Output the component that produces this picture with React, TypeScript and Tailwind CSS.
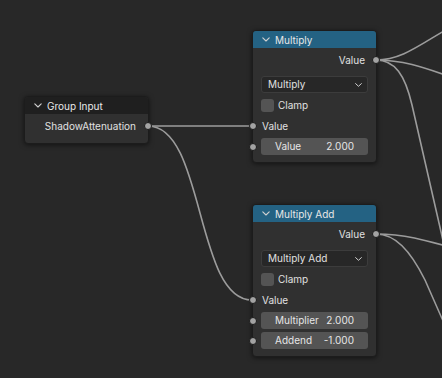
import type { ReactNode } from "react"

const font = { fontFamily: "Inter, 'Noto Sans', sans-serif" }

function Chevron({ className = "" }: { className?: string }) {
  return (
    <svg className={className} width="8" height="5" viewBox="0 0 8 5" fill="none">
      <path d="M0.8 0.8 L4 4 L7.2 0.8" stroke="currentColor" strokeWidth="1.1" strokeLinecap="round" strokeLinejoin="round" />
    </svg>
  )
}

function Socket({ side }: { side: "left" | "right" }) {
  return (
    <span
      className={`absolute top-1/2 h-[8px] w-[8px] -translate-y-1/2 rounded-full border border-[#1a1a1a] bg-[#a3a3a3] ${
        side === "left" ? "left-[-4px]" : "right-[-4px]"
      }`}
    />
  )
}

function Node({
  x,
  y,
  title,
  header,
  children,
}: {
  x: string
  y: string
  title: string
  header: string
  children: ReactNode
}) {
  return (
    <div
      className={`absolute ${x} ${y} w-[125px] rounded-[4px] border border-[#1c1c1c] bg-[#303030] shadow-[0_1px_5px_rgba(0,0,0,0.55)]`}
    >
      <div className={`flex h-[17px] items-center rounded-t-[3px] ${header} pl-[9px] text-[10px] text-[#e8e8e8]`}>
        <Chevron className="mr-[5px] text-[#d0d0d0]" />
        <span className="leading-none">{title}</span>
      </div>
      {children}
    </div>
  )
}

function Output({ label }: { label: string }) {
  return (
    <div className="relative flex h-[16px] items-center justify-end pr-[11px] text-[10px] text-[#e0e0e0]">
      {label}
      <Socket side="right" />
    </div>
  )
}

function Dropdown({ label }: { label: string }) {
  return (
    <div className="mx-[8px] mt-[8px] flex h-[17px] items-center justify-between rounded-[3px] border border-[#3c3c3c] bg-[#272727] pl-[6px] pr-[5px] text-[10px] text-[#e0e0e0]">
      <span>{label}</span>
      <svg width="7" height="4" viewBox="0 0 7 4" fill="none">
        <path d="M0.6 0.6 L3.5 3.3 L6.4 0.6" stroke="#cfcfcf" strokeWidth="1" strokeLinecap="round" strokeLinejoin="round" />
      </svg>
    </div>
  )
}

function Clamp() {
  return (
    <div className="ml-[8px] mt-[6px] flex h-[13px] items-center gap-[4px] text-[10px] text-[#e0e0e0]">
      <span className="h-[13px] w-[13px] rounded-[3px] bg-[#545454]" />
      <span>Clamp</span>
    </div>
  )
}

function Input({ label }: { label: string }) {
  return (
    <div className="relative mt-[6px] flex h-[16px] items-center pl-[9px] text-[10px] text-[#e0e0e0]">
      {label}
      <Socket side="left" />
    </div>
  )
}

function Field({ label, value, mt }: { label: string; value: string; mt: string }) {
  return (
    <div className={`relative ${mt} flex h-[17px] items-center`}>
      <Socket side="left" />
      <div className="mx-[8px] flex h-[17px] flex-1 items-center justify-between rounded-[3px] bg-[#545454] px-[14px] text-[10px] text-[#e6e6e6]">
        <span>{label}</span>
        <span>{value}</span>
      </div>
    </div>
  )
}

export default function App() {
  return (
    <div className="relative h-[378px] w-[442px] overflow-hidden bg-[#282828]" style={font}>
      <svg className="absolute inset-0" width="442" height="378" fill="none" stroke="#9c9c9c" strokeWidth="1.6">
        <path d="M148 126 C 200 126 200 126 252 126" />
        <path d="M148 126 C 205 126 195 300 252 300" />
        <path d="M376 60 C 405 60 425 40 460 22" />
        <path d="M376 60 C 405 60 425 68 460 80" />
        <path d="M376 60 C 395 60 405 75 412 105 L 447 258" />
        <path d="M376 234 C 405 234 425 240 460 250" />
        <path d="M376 234 C 395 234 410 250 425 280 L 447 330" />
      </svg>

      <Node x="left-[24px]" y="top-[96px]" title="Group Input" header="bg-[#1f1f1f]">
        <div className="pb-[9px] pt-[4px]">
          <div className="relative flex h-[16px] items-center justify-end pr-[12px] text-[10px] text-[#e0e0e0]">
            ShadowAttenuation
            <Socket side="right" />
          </div>
        </div>
      </Node>

      <Node x="left-[252px]" y="top-[30px]" title="Multiply" header="bg-[#246283]">
        <div className="pb-[7px] pt-[4px]">
          <Output label="Value" />
          <Dropdown label="Multiply" />
          <Clamp />
          <Input label="Value" />
          <Field label="Value" value="2.000" mt="mt-[4px]" />
        </div>
      </Node>

      <Node x="left-[252px]" y="top-[204px]" title="Multiply Add" header="bg-[#246283]">
        <div className="pb-[7px] pt-[4px]">
          <Output label="Value" />
          <Dropdown label="Multiply Add" />
          <Clamp />
          <Input label="Value" />
          <Field label="Multiplier" value="2.000" mt="mt-[4px]" />
          <Field label="Addend" value="-1.000" mt="mt-[3px]" />
        </div>
      </Node>
    </div>
  )
}
